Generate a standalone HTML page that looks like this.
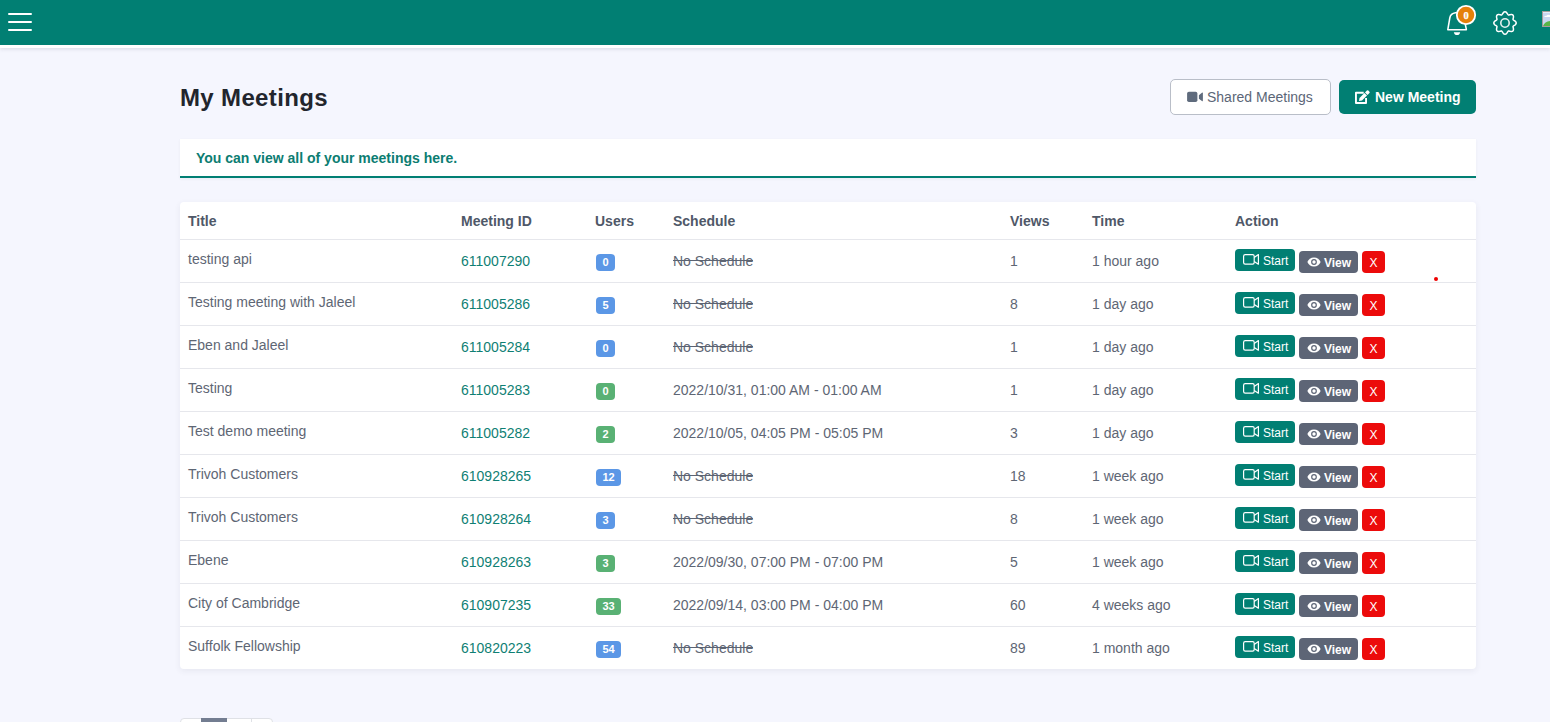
<!DOCTYPE html>
<html><head><meta charset="utf-8"><style>
*{box-sizing:border-box;margin:0;padding:0}
html,body{width:1550px;height:722px;overflow:hidden;background:#f5f6fe;font-family:"Liberation Sans",sans-serif;}
.hdr{position:absolute;left:0;top:0;width:1550px;height:48px;background:#017f73;border-bottom:3px solid #fff;box-shadow:0 1px 4px rgba(60,60,90,.15)}
.hb{position:absolute;left:8px;width:24px;height:2px;background:#fff;border-radius:1px}
.title{position:absolute;left:180px;top:83px;font-size:24px;font-weight:700;color:#22252d;line-height:30px;letter-spacing:0.35px}
.b1{position:absolute;left:1170px;top:79px;width:161px;height:36px;border:1px solid #b9bec8;border-radius:5px;background:#fff;color:#5b6677;font-size:14px;line-height:34px}
.b2{position:absolute;left:1339px;top:80px;width:137px;height:34px;border-radius:5px;background:#017f73;color:#fff;font-size:14px;font-weight:700;line-height:34px}
.alert{position:absolute;left:180px;top:139px;width:1296px;height:39px;background:#fff;border-bottom:2px solid #017f73;box-shadow:0 1px 3px rgba(60,60,90,.06)}
.alert span{position:absolute;left:16px;top:1px;line-height:37px;font-size:14px;font-weight:700;color:#0c7d72}
.card{position:absolute;left:180px;top:202px;width:1296px;height:467px;background:#fff;border-radius:4px;box-shadow:0 2px 6px rgba(60,60,90,.08)}
.th{position:absolute;top:0;left:0;width:1296px;height:38px;border-bottom:1px solid #e6e7ec}
.th .c{font-weight:700;color:#4f5868;line-height:38px;top:0}
.row{position:absolute;left:0;width:1296px;height:43px;border-bottom:1px solid #e6e7ec;}
.row:last-child{border-bottom:none}
.c{position:absolute;font-size:14px;white-space:nowrap;color:#5e6674;line-height:42px;top:0}
.c1{left:8px} .c2{left:281px} .c3{left:415px} .c4{left:493px} .c5{left:830px} .c6{left:912px} .c7{left:1055px}
.row .c1{top:-2px}
.row .c2{color:#0f7f74}
.ns{position:relative} .ns:after{content:"";position:absolute;left:0;right:0;top:7px;height:1px;background:#5b6372}
.bd{display:inline-block;height:17px;line-height:17px;padding:0 6.5px;margin-left:1px;border-radius:4px;color:#fff;font-size:11px;font-weight:700;vertical-align:middle}
.bd.b{background:#5b97e6} .bd.g{background:#59b174}
.btn{position:absolute;height:22px;border-radius:4px;color:#fff;font-size:12px;line-height:24px;white-space:nowrap}
.st{left:0;top:9px;width:60px;background:#017f73;padding-left:28px}
.st .ic{position:absolute;left:8px;top:5px}
.vw{left:64px;top:11px;width:59px;background:#5d6576;font-weight:700;padding-left:25px}
.vw .ic{position:absolute;left:8px;top:6px}
.x{left:127px;top:11px;width:23px;background:#ec0b0b;text-align:center}
.dot{position:absolute;left:1434px;top:277px;width:4px;height:4px;border-radius:50%;background:#e00}
.pg{position:absolute;left:180px;top:718px;width:93px;height:20px;background:#fff;border:1px solid #dfe1e6;border-radius:4px}
.pg .a{position:absolute;left:20px;top:-1px;width:26px;height:22px;background:#737d91}
.pg .sep{position:absolute;left:70px;top:0;width:1px;height:20px;background:#dfe1e6}
</style></head><body>
<div class="hdr">
<div class="hb" style="top:13px"></div><div class="hb" style="top:21px"></div><div class="hb" style="top:29px"></div>
<svg style="position:absolute;left:1440px;top:0" width="40" height="40" viewBox="0 0 40 40">
<path d="M7.8 29.7 L9.8 18 C10.3 15 12.5 13.2 15.5 12.8 L23 12.8 L24.8 22 L26.4 29.7 Z" fill="none" stroke="#fff" stroke-width="1.55" stroke-linejoin="round"/>
<path d="M13.8 32.2 H20.2 C19.8 34.2 18.6 35 17 35 C15.4 35 14.2 34.2 13.8 32.2Z" fill="#fff"/>
<circle cx="26" cy="15" r="9.2" fill="#e5800a" stroke="#fff" stroke-width="1.8"/>
<text x="26.1" y="18.6" text-anchor="middle" font-family="Liberation Serif" font-weight="700" font-size="10.5" fill="#fff" stroke="#fff" stroke-width="0.25">0</text>
</svg>
<svg style="position:absolute;left:1493px;top:11px" width="24" height="24" viewBox="0 0 24 24">
<path d="M12.00 0.80 L12.29 0.83 L12.58 0.91 L12.86 1.03 L13.13 1.21 L13.39 1.42 L13.64 1.67 L13.86 1.94 L14.08 2.23 L14.27 2.53 L14.46 2.82 L14.64 3.10 L14.81 3.36 L14.98 3.59 L15.15 3.78 L15.35 3.92 L15.58 3.96 L15.84 3.95 L16.12 3.91 L16.43 3.84 L16.75 3.77 L17.09 3.69 L17.44 3.62 L17.79 3.57 L18.15 3.54 L18.49 3.54 L18.83 3.57 L19.14 3.64 L19.43 3.74 L19.69 3.89 L19.92 4.08 L20.11 4.31 L20.26 4.57 L20.36 4.86 L20.43 5.17 L20.46 5.51 L20.46 5.85 L20.43 6.21 L20.38 6.56 L20.31 6.91 L20.23 7.25 L20.16 7.57 L20.09 7.88 L20.05 8.16 L20.04 8.42 L20.08 8.65 L20.22 8.85 L20.41 9.02 L20.64 9.19 L20.90 9.36 L21.18 9.54 L21.47 9.73 L21.77 9.92 L22.06 10.14 L22.33 10.36 L22.58 10.61 L22.79 10.87 L22.97 11.14 L23.09 11.42 L23.17 11.71 L23.20 12.00 L23.17 12.29 L23.09 12.58 L22.97 12.86 L22.79 13.13 L22.58 13.39 L22.33 13.64 L22.06 13.86 L21.77 14.08 L21.47 14.27 L21.18 14.46 L20.90 14.64 L20.64 14.81 L20.41 14.98 L20.22 15.15 L20.08 15.35 L20.04 15.58 L20.05 15.84 L20.09 16.12 L20.16 16.43 L20.23 16.75 L20.31 17.09 L20.38 17.44 L20.43 17.79 L20.46 18.15 L20.46 18.49 L20.43 18.83 L20.36 19.14 L20.26 19.43 L20.11 19.69 L19.92 19.92 L19.69 20.11 L19.43 20.26 L19.14 20.36 L18.83 20.43 L18.49 20.46 L18.15 20.46 L17.79 20.43 L17.44 20.38 L17.09 20.31 L16.75 20.23 L16.43 20.16 L16.12 20.09 L15.84 20.05 L15.58 20.04 L15.35 20.08 L15.15 20.22 L14.98 20.41 L14.81 20.64 L14.64 20.90 L14.46 21.18 L14.27 21.47 L14.08 21.77 L13.86 22.06 L13.64 22.33 L13.39 22.58 L13.13 22.79 L12.86 22.97 L12.58 23.09 L12.29 23.17 L12.00 23.20 L11.71 23.17 L11.42 23.09 L11.14 22.97 L10.87 22.79 L10.61 22.58 L10.36 22.33 L10.14 22.06 L9.92 21.77 L9.73 21.47 L9.54 21.18 L9.36 20.90 L9.19 20.64 L9.02 20.41 L8.85 20.22 L8.65 20.08 L8.42 20.04 L8.16 20.05 L7.88 20.09 L7.57 20.16 L7.25 20.23 L6.91 20.31 L6.56 20.38 L6.21 20.43 L5.85 20.46 L5.51 20.46 L5.17 20.43 L4.86 20.36 L4.57 20.26 L4.31 20.11 L4.08 19.92 L3.89 19.69 L3.74 19.43 L3.64 19.14 L3.57 18.83 L3.54 18.49 L3.54 18.15 L3.57 17.79 L3.62 17.44 L3.69 17.09 L3.77 16.75 L3.84 16.43 L3.91 16.12 L3.95 15.84 L3.96 15.58 L3.92 15.35 L3.78 15.15 L3.59 14.98 L3.36 14.81 L3.10 14.64 L2.82 14.46 L2.53 14.27 L2.23 14.08 L1.94 13.86 L1.67 13.64 L1.42 13.39 L1.21 13.13 L1.03 12.86 L0.91 12.58 L0.83 12.29 L0.80 12.00 L0.83 11.71 L0.91 11.42 L1.03 11.14 L1.21 10.87 L1.42 10.61 L1.67 10.36 L1.94 10.14 L2.23 9.92 L2.53 9.73 L2.82 9.54 L3.10 9.36 L3.36 9.19 L3.59 9.02 L3.78 8.85 L3.92 8.65 L3.96 8.42 L3.95 8.16 L3.91 7.88 L3.84 7.57 L3.77 7.25 L3.69 6.91 L3.62 6.56 L3.57 6.21 L3.54 5.85 L3.54 5.51 L3.57 5.17 L3.64 4.86 L3.74 4.57 L3.89 4.31 L4.08 4.08 L4.31 3.89 L4.57 3.74 L4.86 3.64 L5.17 3.57 L5.51 3.54 L5.85 3.54 L6.21 3.57 L6.56 3.62 L6.91 3.69 L7.25 3.77 L7.57 3.84 L7.88 3.91 L8.16 3.95 L8.42 3.96 L8.65 3.92 L8.85 3.78 L9.02 3.59 L9.19 3.36 L9.36 3.10 L9.54 2.82 L9.73 2.53 L9.92 2.23 L10.14 1.94 L10.36 1.67 L10.61 1.42 L10.87 1.21 L11.14 1.03 L11.42 0.91 L11.71 0.83 L12.00 0.80Z" fill="none" stroke="#fff" stroke-width="1.5"/>
<circle cx="12" cy="12" r="4.2" fill="none" stroke="#e6f0ee" stroke-width="1.6"/>
</svg>
<svg style="position:absolute;left:1542px;top:11px" width="8" height="16" viewBox="0 0 8 16">
<rect x="0" y="0" width="16" height="16" fill="#a79c9c"/>
<rect x="1" y="1" width="15" height="14" fill="#c9d7f1"/>
<rect x="1" y="1" width="15" height="1" fill="#e4ecf8"/>
<path d="M2 6 Q3 4.6 4.5 4.8 Q5.6 3 7.2 4 L8 4 V6Z" fill="#fff"/>
<path d="M1 15 Q2.8 10.3 8 9.9 V15Z" fill="#58b548"/>
</svg>
</div>
<div class="title">My Meetings</div>
<div class="b1"><svg style="position:absolute;left:16px;top:11px" width="17" height="12" viewBox="0 0 17 12"><rect x="0.1" y="0.7" width="10.3" height="10.3" rx="1.8" fill="#5f6b7d"/><path d="M11.9 4.2 L14.9 1.8 Q15.9 1.2 15.9 2.4 V9.4 Q15.9 10.6 14.9 10 L11.9 7.8Z" fill="#5f6b7d"/></svg><span style="position:absolute;left:36px;top:0">Shared Meetings</span></div>
<div class="b2"><svg style="position:absolute;left:15px;top:9px" width="17" height="16" viewBox="0 0 17 16">
<path d="M9.7 3.7 H1.95 V14.05 H12.05 V9" fill="none" stroke="#fff" stroke-width="1.9" stroke-linejoin="round"/>
<path d="M5.0 12.0 L5.5 8.96 L10.45 4.01 L12.99 6.55 L8.04 11.5 Z" fill="#fff"/>
<path d="M11.01 3.45 L12.92 1.54 Q13.6 0.9 14.3 1.54 L15.46 2.7 Q16.1 3.4 15.46 4.08 L13.55 5.99 Z" fill="#fff"/>
</svg><span style="position:absolute;left:36px;top:0">New Meeting</span></div>
<div class="alert"><span>You can view all of your meetings here.</span></div>
<div class="card">
<div class="th"><div class="c c1">Title</div><div class="c c2">Meeting ID</div><div class="c c3">Users</div><div class="c c4">Schedule</div><div class="c c5">Views</div><div class="c c6">Time</div><div class="c c7">Action</div></div>
<div class="row" style="top:38px">
<div class="c c1">testing api</div><div class="c c2">611007290</div><div class="c c3"><span class="bd b">0</span></div><div class="c c4"><span class="ns">No Schedule</span></div><div class="c c5">1</div><div class="c c6">1 hour ago</div>
<div class="c c7"><span class="btn st"><svg class="ic" width="17" height="11" viewBox="0 0 17 11"><rect x="0.6" y="0.6" width="10.6" height="9.6" rx="1.6" fill="none" stroke="#fff" stroke-width="1.2"/><path d="M11.2 3.4 L15.4 0.6 V10.2 L11.2 7.4" fill="none" stroke="#fff" stroke-width="1.2" stroke-linejoin="round"/></svg>Start</span><span class="btn vw"><svg class="ic" width="14" height="10" viewBox="0 0 14 10"><path d="M7 0.5C3.8 0.5 1.4 2.6 0.4 5c1 2.4 3.4 4.5 6.6 4.5s5.6-2.1 6.6-4.5C12.6 2.6 10.2 0.5 7 0.5z" fill="#fff"/><circle cx="7" cy="5" r="2.9" fill="#5d6576"/><circle cx="7" cy="5" r="1.7" fill="#fff"/></svg>View</span><span class="btn x">X</span></div>
</div><div class="row" style="top:81px">
<div class="c c1">Testing meeting with Jaleel</div><div class="c c2">611005286</div><div class="c c3"><span class="bd b">5</span></div><div class="c c4"><span class="ns">No Schedule</span></div><div class="c c5">8</div><div class="c c6">1 day ago</div>
<div class="c c7"><span class="btn st"><svg class="ic" width="17" height="11" viewBox="0 0 17 11"><rect x="0.6" y="0.6" width="10.6" height="9.6" rx="1.6" fill="none" stroke="#fff" stroke-width="1.2"/><path d="M11.2 3.4 L15.4 0.6 V10.2 L11.2 7.4" fill="none" stroke="#fff" stroke-width="1.2" stroke-linejoin="round"/></svg>Start</span><span class="btn vw"><svg class="ic" width="14" height="10" viewBox="0 0 14 10"><path d="M7 0.5C3.8 0.5 1.4 2.6 0.4 5c1 2.4 3.4 4.5 6.6 4.5s5.6-2.1 6.6-4.5C12.6 2.6 10.2 0.5 7 0.5z" fill="#fff"/><circle cx="7" cy="5" r="2.9" fill="#5d6576"/><circle cx="7" cy="5" r="1.7" fill="#fff"/></svg>View</span><span class="btn x">X</span></div>
</div><div class="row" style="top:124px">
<div class="c c1">Eben and Jaleel</div><div class="c c2">611005284</div><div class="c c3"><span class="bd b">0</span></div><div class="c c4"><span class="ns">No Schedule</span></div><div class="c c5">1</div><div class="c c6">1 day ago</div>
<div class="c c7"><span class="btn st"><svg class="ic" width="17" height="11" viewBox="0 0 17 11"><rect x="0.6" y="0.6" width="10.6" height="9.6" rx="1.6" fill="none" stroke="#fff" stroke-width="1.2"/><path d="M11.2 3.4 L15.4 0.6 V10.2 L11.2 7.4" fill="none" stroke="#fff" stroke-width="1.2" stroke-linejoin="round"/></svg>Start</span><span class="btn vw"><svg class="ic" width="14" height="10" viewBox="0 0 14 10"><path d="M7 0.5C3.8 0.5 1.4 2.6 0.4 5c1 2.4 3.4 4.5 6.6 4.5s5.6-2.1 6.6-4.5C12.6 2.6 10.2 0.5 7 0.5z" fill="#fff"/><circle cx="7" cy="5" r="2.9" fill="#5d6576"/><circle cx="7" cy="5" r="1.7" fill="#fff"/></svg>View</span><span class="btn x">X</span></div>
</div><div class="row" style="top:167px">
<div class="c c1">Testing</div><div class="c c2">611005283</div><div class="c c3"><span class="bd g">0</span></div><div class="c c4">2022/10/31, 01:00 AM - 01:00 AM</div><div class="c c5">1</div><div class="c c6">1 day ago</div>
<div class="c c7"><span class="btn st"><svg class="ic" width="17" height="11" viewBox="0 0 17 11"><rect x="0.6" y="0.6" width="10.6" height="9.6" rx="1.6" fill="none" stroke="#fff" stroke-width="1.2"/><path d="M11.2 3.4 L15.4 0.6 V10.2 L11.2 7.4" fill="none" stroke="#fff" stroke-width="1.2" stroke-linejoin="round"/></svg>Start</span><span class="btn vw"><svg class="ic" width="14" height="10" viewBox="0 0 14 10"><path d="M7 0.5C3.8 0.5 1.4 2.6 0.4 5c1 2.4 3.4 4.5 6.6 4.5s5.6-2.1 6.6-4.5C12.6 2.6 10.2 0.5 7 0.5z" fill="#fff"/><circle cx="7" cy="5" r="2.9" fill="#5d6576"/><circle cx="7" cy="5" r="1.7" fill="#fff"/></svg>View</span><span class="btn x">X</span></div>
</div><div class="row" style="top:210px">
<div class="c c1">Test demo meeting</div><div class="c c2">611005282</div><div class="c c3"><span class="bd g">2</span></div><div class="c c4">2022/10/05, 04:05 PM - 05:05 PM</div><div class="c c5">3</div><div class="c c6">1 day ago</div>
<div class="c c7"><span class="btn st"><svg class="ic" width="17" height="11" viewBox="0 0 17 11"><rect x="0.6" y="0.6" width="10.6" height="9.6" rx="1.6" fill="none" stroke="#fff" stroke-width="1.2"/><path d="M11.2 3.4 L15.4 0.6 V10.2 L11.2 7.4" fill="none" stroke="#fff" stroke-width="1.2" stroke-linejoin="round"/></svg>Start</span><span class="btn vw"><svg class="ic" width="14" height="10" viewBox="0 0 14 10"><path d="M7 0.5C3.8 0.5 1.4 2.6 0.4 5c1 2.4 3.4 4.5 6.6 4.5s5.6-2.1 6.6-4.5C12.6 2.6 10.2 0.5 7 0.5z" fill="#fff"/><circle cx="7" cy="5" r="2.9" fill="#5d6576"/><circle cx="7" cy="5" r="1.7" fill="#fff"/></svg>View</span><span class="btn x">X</span></div>
</div><div class="row" style="top:253px">
<div class="c c1">Trivoh Customers</div><div class="c c2">610928265</div><div class="c c3"><span class="bd b">12</span></div><div class="c c4"><span class="ns">No Schedule</span></div><div class="c c5">18</div><div class="c c6">1 week ago</div>
<div class="c c7"><span class="btn st"><svg class="ic" width="17" height="11" viewBox="0 0 17 11"><rect x="0.6" y="0.6" width="10.6" height="9.6" rx="1.6" fill="none" stroke="#fff" stroke-width="1.2"/><path d="M11.2 3.4 L15.4 0.6 V10.2 L11.2 7.4" fill="none" stroke="#fff" stroke-width="1.2" stroke-linejoin="round"/></svg>Start</span><span class="btn vw"><svg class="ic" width="14" height="10" viewBox="0 0 14 10"><path d="M7 0.5C3.8 0.5 1.4 2.6 0.4 5c1 2.4 3.4 4.5 6.6 4.5s5.6-2.1 6.6-4.5C12.6 2.6 10.2 0.5 7 0.5z" fill="#fff"/><circle cx="7" cy="5" r="2.9" fill="#5d6576"/><circle cx="7" cy="5" r="1.7" fill="#fff"/></svg>View</span><span class="btn x">X</span></div>
</div><div class="row" style="top:296px">
<div class="c c1">Trivoh Customers</div><div class="c c2">610928264</div><div class="c c3"><span class="bd b">3</span></div><div class="c c4"><span class="ns">No Schedule</span></div><div class="c c5">8</div><div class="c c6">1 week ago</div>
<div class="c c7"><span class="btn st"><svg class="ic" width="17" height="11" viewBox="0 0 17 11"><rect x="0.6" y="0.6" width="10.6" height="9.6" rx="1.6" fill="none" stroke="#fff" stroke-width="1.2"/><path d="M11.2 3.4 L15.4 0.6 V10.2 L11.2 7.4" fill="none" stroke="#fff" stroke-width="1.2" stroke-linejoin="round"/></svg>Start</span><span class="btn vw"><svg class="ic" width="14" height="10" viewBox="0 0 14 10"><path d="M7 0.5C3.8 0.5 1.4 2.6 0.4 5c1 2.4 3.4 4.5 6.6 4.5s5.6-2.1 6.6-4.5C12.6 2.6 10.2 0.5 7 0.5z" fill="#fff"/><circle cx="7" cy="5" r="2.9" fill="#5d6576"/><circle cx="7" cy="5" r="1.7" fill="#fff"/></svg>View</span><span class="btn x">X</span></div>
</div><div class="row" style="top:339px">
<div class="c c1">Ebene</div><div class="c c2">610928263</div><div class="c c3"><span class="bd g">3</span></div><div class="c c4">2022/09/30, 07:00 PM - 07:00 PM</div><div class="c c5">5</div><div class="c c6">1 week ago</div>
<div class="c c7"><span class="btn st"><svg class="ic" width="17" height="11" viewBox="0 0 17 11"><rect x="0.6" y="0.6" width="10.6" height="9.6" rx="1.6" fill="none" stroke="#fff" stroke-width="1.2"/><path d="M11.2 3.4 L15.4 0.6 V10.2 L11.2 7.4" fill="none" stroke="#fff" stroke-width="1.2" stroke-linejoin="round"/></svg>Start</span><span class="btn vw"><svg class="ic" width="14" height="10" viewBox="0 0 14 10"><path d="M7 0.5C3.8 0.5 1.4 2.6 0.4 5c1 2.4 3.4 4.5 6.6 4.5s5.6-2.1 6.6-4.5C12.6 2.6 10.2 0.5 7 0.5z" fill="#fff"/><circle cx="7" cy="5" r="2.9" fill="#5d6576"/><circle cx="7" cy="5" r="1.7" fill="#fff"/></svg>View</span><span class="btn x">X</span></div>
</div><div class="row" style="top:382px">
<div class="c c1">City of Cambridge</div><div class="c c2">610907235</div><div class="c c3"><span class="bd g">33</span></div><div class="c c4">2022/09/14, 03:00 PM - 04:00 PM</div><div class="c c5">60</div><div class="c c6">4 weeks ago</div>
<div class="c c7"><span class="btn st"><svg class="ic" width="17" height="11" viewBox="0 0 17 11"><rect x="0.6" y="0.6" width="10.6" height="9.6" rx="1.6" fill="none" stroke="#fff" stroke-width="1.2"/><path d="M11.2 3.4 L15.4 0.6 V10.2 L11.2 7.4" fill="none" stroke="#fff" stroke-width="1.2" stroke-linejoin="round"/></svg>Start</span><span class="btn vw"><svg class="ic" width="14" height="10" viewBox="0 0 14 10"><path d="M7 0.5C3.8 0.5 1.4 2.6 0.4 5c1 2.4 3.4 4.5 6.6 4.5s5.6-2.1 6.6-4.5C12.6 2.6 10.2 0.5 7 0.5z" fill="#fff"/><circle cx="7" cy="5" r="2.9" fill="#5d6576"/><circle cx="7" cy="5" r="1.7" fill="#fff"/></svg>View</span><span class="btn x">X</span></div>
</div><div class="row" style="top:425px">
<div class="c c1">Suffolk Fellowship</div><div class="c c2">610820223</div><div class="c c3"><span class="bd b">54</span></div><div class="c c4"><span class="ns">No Schedule</span></div><div class="c c5">89</div><div class="c c6">1 month ago</div>
<div class="c c7"><span class="btn st"><svg class="ic" width="17" height="11" viewBox="0 0 17 11"><rect x="0.6" y="0.6" width="10.6" height="9.6" rx="1.6" fill="none" stroke="#fff" stroke-width="1.2"/><path d="M11.2 3.4 L15.4 0.6 V10.2 L11.2 7.4" fill="none" stroke="#fff" stroke-width="1.2" stroke-linejoin="round"/></svg>Start</span><span class="btn vw"><svg class="ic" width="14" height="10" viewBox="0 0 14 10"><path d="M7 0.5C3.8 0.5 1.4 2.6 0.4 5c1 2.4 3.4 4.5 6.6 4.5s5.6-2.1 6.6-4.5C12.6 2.6 10.2 0.5 7 0.5z" fill="#fff"/><circle cx="7" cy="5" r="2.9" fill="#5d6576"/><circle cx="7" cy="5" r="1.7" fill="#fff"/></svg>View</span><span class="btn x">X</span></div>
</div>
</div>
<div class="dot"></div>
<div class="pg"><div class="a"></div><div class="sep"></div></div>
</body></html>
